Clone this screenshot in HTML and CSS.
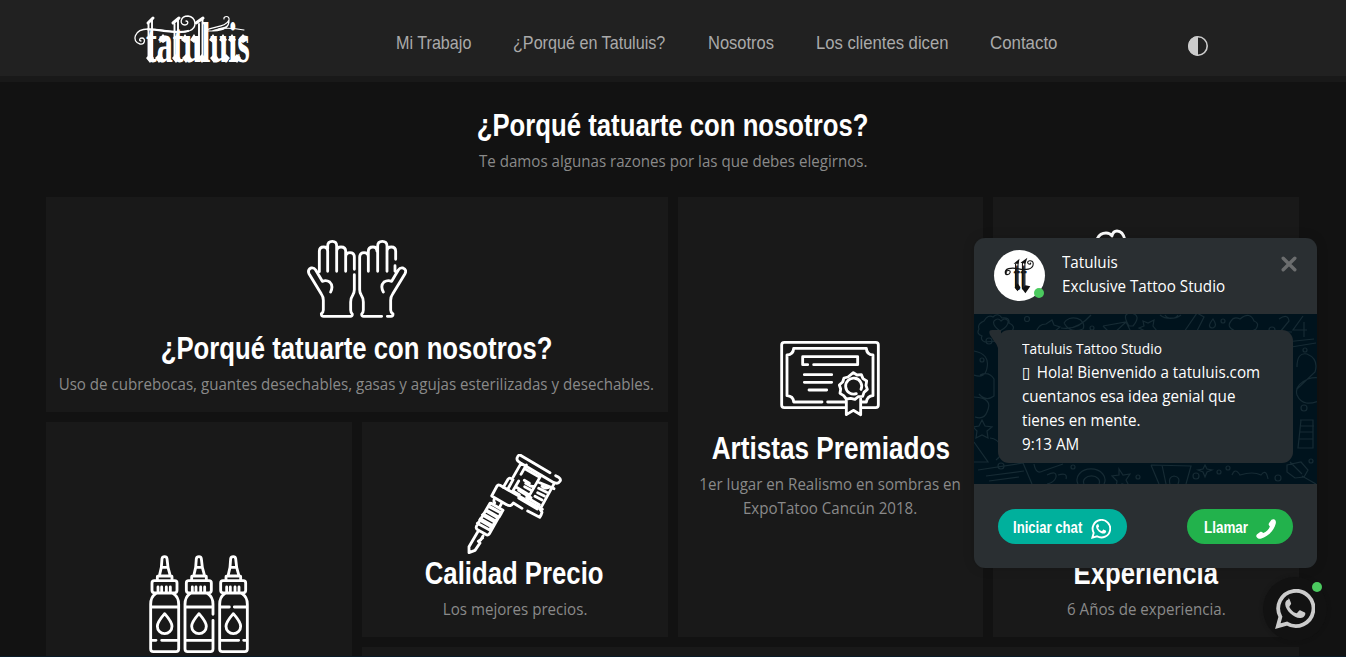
FILE: index.html
```html
<!DOCTYPE html>
<html lang="es">
<head>
<meta charset="utf-8">
<title>Tatuluis</title>
<link rel="stylesheet" href="styles.css">
</head>
<body>
<svg class="defs" width="0" height="0" aria-hidden="true">
  <symbol id="whatsapp" viewBox="0 0 40 40">
    <path d="M2.800 37.200 5.400 27.800A17.600 17.600 0 1 1 12 34.600Z" fill="none" stroke="currentColor" stroke-width="3.800" stroke-linejoin="miter"/>
    <path d="M13.400 10.500c-1.800.3-3.400 2.300-3.200 4.800.4 6.400 8.800 13.700 14.600 13.700 3 0 5.300-1.900 5.500-4.100.1-1-.2-1.300-1-1.700l-3.700-1.800c-.8-.3-1.300-.2-1.800.5l-1.500 1.900c-.4.5-.8.6-1.500.3-2.800-1.200-4.800-3.200-6.200-5.700-.4-.6-.3-1 .1-1.500l1.200-1.600c.3-.5.3-.9.100-1.400l-1.600-3.800c-.3-.5-.6-.6-1-.6Z" fill="currentColor"/>
  </symbol>
</svg>

<header class="topbar">
  <svg class="logo" viewBox="130 10 124 58" role="img" aria-label="tatuluis">
    <text class="logo-text" transform="translate(146 62) scale(.57 1)" textLength="182" lengthAdjust="spacingAndGlyphs">tatuluis</text>
    <g fill="none" stroke="#fff" stroke-linecap="round">
      <path d="M140 44c5 1 6-6 2-6-3 0-3 3-1 3M140 44c-9-2-6-15 8-15 16 0 30 6 41 2 9-3 7-14-1-15-8 0-9 9-3 9 3 0 4-4 1-4" stroke-width="1.300"/>
      <path d="M148 29.500c14 0 28 5 40 1.500" stroke-width="2.200"/>
      <path d="M206 30c10-4 20-3 23-10 1-5-6-4-5-1M208 31c14 0 20-2 21-9M212 31c10-4 22-3 32-1M218 29c5-2 11 0 11-9" stroke-width="1.200"/>
      <path d="M148.500 24v35M152 19v39M174.500 24v35M178 19v39M199 24v35M202.500 19v39" stroke-width="1.900"/>
      <path d="m148 23 5-5M173 23l6-5M196 23l7-5" stroke-width="3"/>
    </g>
    <path d="m146 58 4-4 4 4-4 5ZM155 58l4-4 4 4-4 5ZM172 58l4-4 4 4-4 5ZM182 58l4-4 4 4-4 5ZM198 58l4-4 4 4-4 5ZM210 58l4-4 4 4-4 5ZM222 58l4-4 4 4-4 5ZM233 58l4-4 4 4-4 5ZM158 40l5-6 5 6-5 3ZM181 40l4-6 4 6-4 3ZM190 40l4-6 4 6-4 3ZM209 40l4-6 4 6-4 3ZM219 40l4-6 4 6-4 3ZM228 40l4-6 4 6-4 3ZM238 40l5-6 5 6-5 3Z" fill="#fff"/>
  </svg>
  <nav class="nav">
    <a class="nav-work"><span>Mi Trabajo</span></a>
    <a class="nav-why"><span>¿Porqué en Tatuluis?</span></a>
    <a class="nav-us"><span>Nosotros</span></a>
    <a class="nav-clients"><span>Los clientes dicen</span></a>
    <a class="nav-contact"><span>Contacto</span></a>
  </nav>
  <svg class="theme" viewBox="0 0 20 20"><circle cx="10" cy="10" r="9.200" fill="none" stroke="#ccc" stroke-width="1.600"/><path d="M10 0a10 10 0 0 0 0 20Z" fill="#ccc"/></svg>
</header>

<main class="page">
  <section class="intro">
    <h2 class="title"><span>¿Porqué tatuarte con nosotros?</span></h2>
    <p class="copy"><span>Te damos algunas razones por las que debes elegirnos.</span></p>
  </section>

  <section class="grid">
    <article class="card card-gloves">
      <svg class="icon" viewBox="51 12 300 300">
        <path d="M88 140V79q0-13 13-13 12 0 12 13v60M113 73V63q0-14 14-14 13 0 13 14v76M140 79q0-13 13-13 14 0 14 13v60M167 96q0-13 13-13 13 0 13 13v37M193 149v45q0 9-5 17-6 9-6 20v24q0 8 5 12 0 7-6 7H101q-7 0-7-8 6-4 6-11v-29q0-11-6-19l-37-61q-5-12 6-17 9-2 14 6l20 34q12-5 22 2 12 11 3 30"/>
        <path d="M317 103V79q0-13-13-13t-13 13v60M291 79V63q0-14-14-14-14 0-14 14v76M261 79q0-13-12-13-14 0-14 13v60M235 96q0-13-13-13-12 0-13 13v98q0 9 5 17 6 9 6 20v24q0 8-5 12 0 7 6 7h54M315 122v17M292 274h11q6 0 6-7-7-5-7-12v-29q0-11 6-19l37-61q6-12-6-17-9-2-14 6l-20 34q-12-5-23 2-12 11-2 30"/>
      </svg>
      <h2 class="title"><span>¿Porqué tatuarte con nosotros?</span></h2>
      <p class="copy"><span>Uso de cubrebocas, guantes desechables, gasas y agujas esterilizadas y desechables.</span></p>
    </article>

    <article class="card card-artists">
      <svg class="icon" viewBox="45 11 300 300">
        <path d="M242 250H58q-8 0-8-8V62q0-8 8-8h274q8 0 8 8v180q0 8-8 8h-40M171 233H86q-1-18-20-19V92q19-1 20-20h218q1 19 20 20v122q-17 1-20 19h-12M188 233h54M128 121h-15V97h165v24H146M118 151h82M118 174h82M132 197h53"/>
        <path d="m265 145 11 7 13-1 5 12 11 7-2 13 4 12-10 9-4 12-13 1-10 8-13-3-13 2-8-10-11-7 2-13-4-12 10-9 4-12 12-3ZM244 223v48l21-13 22 13v-48M274 208a24 24 0 1 1 14-13"/>
      </svg>
      <h2 class="title t-artists"><span>Artistas Premiados</span></h2>
      <p class="copy"><span>1er lugar en Realismo en sombras en<br>ExpoTatoo Cancún 2018.</span></p>
    </article>

    <article class="card card-experience">
      <svg class="icon icon-tall" viewBox="0 0 100 325">
        <path d="M1 10Q4 4 10 4q4 0 6 3 1-5 5-5 6 0 8 9M1 10q4 40 24 50v178q0 50 25 80 25-30 25-80V58q-5-30-46-47"/>
      </svg>
      <h2 class="title"><span>Experiencia</span></h2>
      <p class="copy"><span>6 Años de experiencia.</span></p>
    </article>

    <article class="card card-ink">
      <svg class="icon" viewBox="57 29 300 300">
        <g id="bottle"><path d="M94 66l2-26q1-6 8-6 6 0 7 6l3 26M88 92l6-26h20l7 26M82 105v-10q0-3 6-3h33q5 0 5 3v10M73 106h61q7 0 7 7v22q0 8-8 8H74q-8 0-8-8v-22q0-7 7-7ZM84 125v14M95 125v14M109 125v14M121 125v14M104 205q-22 25-22 38a22 22 0 0 0 44 0q0-13-22-38Z"/></g>
        <use href="#bottle" x="103"/><use href="#bottle" x="206"/>
        <path d="M77 145q-15 10-15 32v134q0 8 8 8h68q8 0 8-8V177q0-22-16-32M65 185h80M65 285h13M95 285h50"/>
        <path d="M180 145q-15 10-15 32v134q0 8 8 8h68q8 0 8-8v-86M249 207v-30q0-22-16-32M168 185h80M168 285h80"/>
        <path d="M284 145q-15 10-15 32v134q0 8 8 8h67q8 0 8-8V177q0-22-16-32M270 185h28M313 185h37M270 285h56M341 285h10"/>
      </svg>
    </article>

    <article class="card card-price">
      <svg class="icon" viewBox="45 42 300 300">
        <path d="M300 98 215 48q-8-6-12 2-5 9 2 14l8 6-24 42M189 152l17-29M213 70l100 59M317 107l9 5q8 6 4 12-6 9-16 4l-44 80 6 9q-2 8-7 15l-36-19M216 205l-26-16q-8 13-20 5l-45-26 16-30q3-5 9-2l127 72"/>
        <path d="m160 142 14-24q4-6 10-2l5 3-15 28M174 146l12-21M190 154l18 10M229 75l-16 28M226 87l38 22M273 106l-45 78M264 126l48 20M238 130l-15-9M254 139q-11 2-18-4l-9-5M246 152l-22-12M238 165l-40-24M296 142q-13 5-20-3M290 157l-24-12M283 168l-20-10M276 180l-21-11M268 194l-38-22M262 207l-56-33M206 151l37 22"/>
        <path d="M133 177q-3 7 1 12M156 188l-6 11M123 190l36 21-5 8-37-21M117 200l37 20-7 12-34-20M107 212l36 21-6 10-37-21M97 225l37 21-5 11-38-21M89 240l35 20-5 10-37-20M120 190l-39 66q-6 9 3 14l23 13q8 5 12-3l35-62M83 276l-26 44v18l18-7 15-22-5-5 13-10M99 288l-7 12"/>
      </svg>
      <h2 class="title"><span>Calidad Precio</span></h2>
      <p class="copy"><span>Los mejores precios.</span></p>
    </article>

    <article class="card card-wide"></article>
  </section>
</main>

<aside class="chat">
  <header class="chat-head">
    <div class="avatar">
      <svg viewBox="0 0 52 52">
        <text class="avatar-text" transform="translate(20 41) scale(.46 1)">tt</text>
        <path d="M12 25c5 1 6-5 2-4-2 0-2 2-1 3M12 25c-3-7 7-7 12-6 8 2 16 1 16-5 0-5-8-3-5 0 2 1 3 0 2-1M22 14v25M24.500 12v27M29 13v27M31.500 11v29" fill="none" stroke="#111" stroke-width="1.100"/>
        <path d="m20 14 6-5-1 5ZM27 13l7-5-2 6ZM21 38l3-4 3 4-3 4ZM29 40l3-4 5 1-5 7Z" fill="#111"/>
      </svg>
      <i class="dot"></i>
    </div>
    <div class="who"><span>Tatuluis</span><span>Exclusive Tattoo Studio</span></div>
    <svg class="close" viewBox="0 0 16 16"><path d="m2.200 2.200 11.600 11.600M13.800 2.200 2.200 13.800" stroke="#6b6d6e" stroke-width="3.400" stroke-linecap="round"/></svg>
  </header>
  <div class="chat-body">
    <svg class="doodles" viewBox="974 314 343 170">
      <path d="M984 321q4-7 9-4 5-5 9 1 8-1 7 5 7 3 3 8 5 5-2 9l-25 2q-5-2-3-6-6-2-3-7-2-5 5-8ZM1000 331q-8-6-6-10 4-4 7 0 4-4 7 0 1 5-8 10ZM1036 333q2-9 10-9l6-4 2 5 6 2-5 4v5M1064 323a10 8 0 1 1 19 6q-13 5-19-6M1061 328q16 3 30-13M1103 326l23-4 5 10M1103 326l9 9 14-13M1129 326q-8-13 2-13 11 2 2 13ZM1143 321l5 2 6-3-1 6 4 5-6 1-4 5-2-6-6-3 5-2ZM1160 315a14 10 0 0 0 21 0M1165 315a7 5 0 0 0 13 0M1184 332l13-19 7 4-8 16M1213 319q-7 9 0 9 5-2 0-9ZM1235 331q-9-4-4-10 3-5 9-2 10-8 14 2 6 2 2 8-7 5-21 2ZM1279 319q9-6 10 2l-9 11h12M1303 316l-10 14h14M1304 322v15M1276 343l38-4M1285 348l31-5M1297 367q0-15 10-13 12 5 8 18l-18 17M1308 379q12-4 18 4l-3 16q-20 10-26-4-3-10 11-16ZM1300 420h13v28h-15l3-28M1301 426h13M1300 432h13M1299 439h14"/>
      <path d="M974 351q16 3 13 17-2 11-13 7M980 375q9-4 14 4v17q-8 6-15-2M974 397q20 1 13 15-3 8-12 5M982 420l3 6 7 1-5 4 1 7-6-3-6 3 1-7-4-4 6-1ZM990 438a12 12 0 0 1 6 22M974 442l14 20h-14M978 470l45-7 9 21M986 476l38-5M989 481l30-4M1034 464q2 11 9 7l20-7M1047 475q10-5 9 2-1 5-9 7M1058 475q10-3 8 4M1078 484a14 11 0 1 1 26 0M1084 484a8 6 0 1 1 15 0M1119 469l4 6 7-1-4 6 3 6-7-2-6 4 1-7-5-5 7-1ZM1151 465l8 19M1162 465l4 19M1151 465l40 1-5 18M1170 484q-2-7 4-8 7 1 4 8M1205 465l2 4 5 1-5 2-2 5-2-5-5-2 5-1ZM1232 475q3-8 8 0 13-4 21 0 5-7 7 4M1287 465l14-3 7 8-4 7-9 1-8-6ZM1290 462l12 12M1302 476l14 8"/>
      <g><circle cx="1027" cy="319" r="2.500"/><circle cx="989" cy="341" r="3"/><circle cx="1092" cy="328" r="2"/><circle cx="1223" cy="321" r="2"/><circle cx="1272" cy="330" r="3"/><circle cx="1305" cy="350" r="2"/><circle cx="982" cy="360" r="2"/><circle cx="1304" cy="408" r="3"/><circle cx="1311" cy="461" r="2"/><circle cx="1001" cy="466" r="3"/><circle cx="1138" cy="477" r="2"/><circle cx="1196" cy="476" r="3"/><circle cx="1219" cy="472" r="2"/><circle cx="1228" cy="468" r="2"/><circle cx="1278" cy="478" r="3"/><circle cx="1073" cy="467" r="2"/></g>
    </svg>
    <div class="bubble">
      <svg class="tail" viewBox="0 0 12 18"><path d="M3 0h9v18h-3Q8 14 5 11L1 5Q-1 0 3 0Z" fill="#262d31"/></svg>
      <span class="b-name">Tatuluis Tattoo Studio</span>
      <span><i class="tofu">▯</i> Hola! Bienvenido a tatuluis.com</span>
      <span>cuentanos esa idea genial que</span>
      <span>tienes en mente.</span>
      <span>9:13 AM</span>
    </div>
  </div>
  <footer class="chat-foot">
    <a class="btn btn-chat"><span>Iniciar chat</span><svg viewBox="0 0 40 40"><use href="#whatsapp"/></svg></a>
    <a class="btn btn-call"><span>Llamar</span><svg viewBox="0 0 20 20"><path d="M15.500.8c1-.8 2-.9 3-.2 1.500 1 1.600 2.500 1.200 4.200C17.700 12 11.500 18.200 4.700 19.700c-1.500.3-2.900-.2-3.900-1.500-.8-1-.7-2 .3-2.900l2.700-2c1-.7 2-.6 2.800.1l.7.700c3-1.300 5.400-3.700 6.600-6.700l-.6-.6c-.8-.9-.9-1.900-.2-2.900Z" fill="#fff"/></svg></a>
  </footer>
</aside>
<a class="fab"><svg viewBox="0 0 40 40"><use href="#whatsapp"/></svg><i class="dot"></i></a>
<div class="edge"></div>
</body>
</html>
```
FILE: styles.css
```css
* { box-sizing: border-box; }
body {
  margin: 0;
  height: 657px;
  overflow: hidden;
  position: relative;
  background: #121212;
  color: #fff;
  font: 15.5px/24px "Open Sans", "Noto Sans", sans-serif;
}
.defs { position: absolute; }
h2, p { margin: 0; }

.topbar {
  display: flex;
  align-items: flex-start;
  height: 82px;
  padding-left: 130px;
  background: #212121;
  border-bottom: 6px solid #191919;
}
.logo { width: 124px; height: 58px; margin-top: 10px; overflow: visible; }
.logo-text { font: bold 56px "Liberation Serif", serif; fill: #fff; }
.nav {
  display: flex;
  gap: 42px;
  margin: 31px 0 0 142px;
  font: 19px/24px "Liberation Sans", sans-serif;
  color: #aaa;
  white-space: nowrap;
}
.nav span { display: inline-block; transform: scaleX(.85); transform-origin: 0 50%; }
.nav-work { width: 75px; }
.nav-why { width: 153px; }
.nav-us { width: 66px; }
.nav-us span { transform: scaleX(.868); }
.nav-clients { width: 132px; }
.nav-clients span { transform: scaleX(.877); }
.nav-contact { width: 67px; }
.nav-contact span { transform: scaleX(.887); }
.theme { width: 20px; height: 20px; margin: 36px 0 0 131px; }

.page { height: 575px; overflow: hidden; }
.intro { padding-top: 24px; height: 115px; text-align: center; }
.title {
  height: 38px;
  margin-bottom: 5px;
  font: bold 32px/38px "Liberation Sans", sans-serif;
  text-align: center;
  white-space: nowrap;
}
.title span { display: inline-block; transform: scaleX(.804); }
.t-artists span { transform: scaleX(.817); }
.copy { color: #8a8a8a; text-align: center; white-space: nowrap; }
.copy span { display: inline-block; transform: scaleX(.975); }

.grid {
  display: grid;
  grid-template-columns: repeat(4, 1fr);
  grid-template-rows: 215px 215px 10px;
  gap: 10px;
  width: 1253px;
  margin-left: 46px;
}
.card {
  display: flex;
  flex-direction: column;
  align-items: center;
  justify-content: center;
  padding-top: 16px;
  background: #191919;
}
.card-gloves { grid-area: 1 / 1 / 2 / 3; }
.card-artists { grid-area: 1 / 3 / 3 / 4; padding-top: 13px; }
.card-artists .title { margin-top: 1px; }
.card-experience { grid-area: 1 / 4 / 3 / 5; }
.card-ink { grid-area: 2 / 1 / 4 / 2; justify-content: flex-start; padding-top: 132.5px; }
.card-price { grid-area: 2 / 2 / 3 / 3; }
.card-wide { grid-area: 3 / 2 / 4 / 5; padding: 0; }
.icon {
  flex: none;
  width: 100px;
  height: 100px;
  fill: none;
  stroke: #fff;
  stroke-width: 8.5;
  stroke-linecap: round;
  stroke-linejoin: round;
}
.icon-tall { height: 325px; stroke-width: 2.8; }
.edge { position: absolute; left: 0; right: 0; bottom: 0; height: 1px; background: #0a1b28; }

.dot { position: absolute; width: 10px; height: 10px; border-radius: 50%; background: #4bca5f; }
.chat {
  position: absolute;
  left: 974px;
  top: 238px;
  width: 343px;
  height: 330px;
  border-radius: 11px;
  overflow: hidden;
  background: #2a2f32;
  box-shadow: 0 0 12px rgba(0, 0, 0, .15);
}
.chat-head { display: flex; height: 76px; padding: 12px 20px; }
.avatar { position: relative; width: 51px; height: 51px; border-radius: 50%; background: #fff; }
.avatar svg { width: 51px; height: 51px; }
.avatar-text { font: bold 44px "Liberation Serif", serif; fill: #222; }
.avatar .dot { right: 1px; bottom: 3px; }
.who { display: flex; flex-direction: column; flex: 1; margin-left: 17px; white-space: nowrap; }
.who span, .bubble span { transform: scaleX(.98); transform-origin: 0 50%; }
.close { width: 16px; height: 16px; margin: 6px 0 0; }
.chat-body { position: relative; height: 170px; padding: 16px 24px; background: #00131d; }
.doodles {
  position: absolute;
  inset: 0;
  width: 343px;
  height: 170px;
  fill: none;
  stroke: #162b34;
  stroke-width: 1.2;
}
.bubble {
  position: relative;
  display: flex;
  flex-direction: column;
  height: 133px;
  padding: 8px 24px;
  border-radius: 11px;
  background: #262d31;
  white-space: nowrap;
}
.tail { position: absolute; left: -9px; top: 0; width: 12px; height: 18px; }
.bubble .b-name { font-size: 14px; line-height: 22px; transform: scaleX(.98); }
.tofu { display: inline-block; width: 11px; font: 16px/20px "DejaVu Sans", sans-serif; }
.chat-foot { display: flex; justify-content: space-between; padding: 25px 24px; }
.btn {
  display: flex;
  align-items: center;
  justify-content: space-between;
  height: 35px;
  border-radius: 18px;
  font: bold 16px/35px "Liberation Sans", sans-serif;
  white-space: nowrap;
}
.btn span { width: 60px; padding-top: 1px; transform: scaleX(.82); transform-origin: 0 50%; }
.btn svg { width: 20px; height: 20px; margin-top: 4px; }
.btn-chat { width: 129px; padding: 0 16px 0 15px; background: #00b09c; }
.btn-call { width: 106px; padding: 0 17px; background: #22b24c; }
.btn-call span { width: 40px; transform: scaleX(.84); }
.fab {
  position: absolute;
  left: 1263px;
  top: 577px;
  width: 64px;
  height: 64px;
  padding: 12px;
  border-radius: 50%;
  background: #121212;
  color: #ccc;
  box-shadow: 0 0 4px rgba(18, 18, 18, .3);
}
.fab svg { width: 40px; height: 40px; }
.fab .dot { left: 49px; top: 5px; }
```
